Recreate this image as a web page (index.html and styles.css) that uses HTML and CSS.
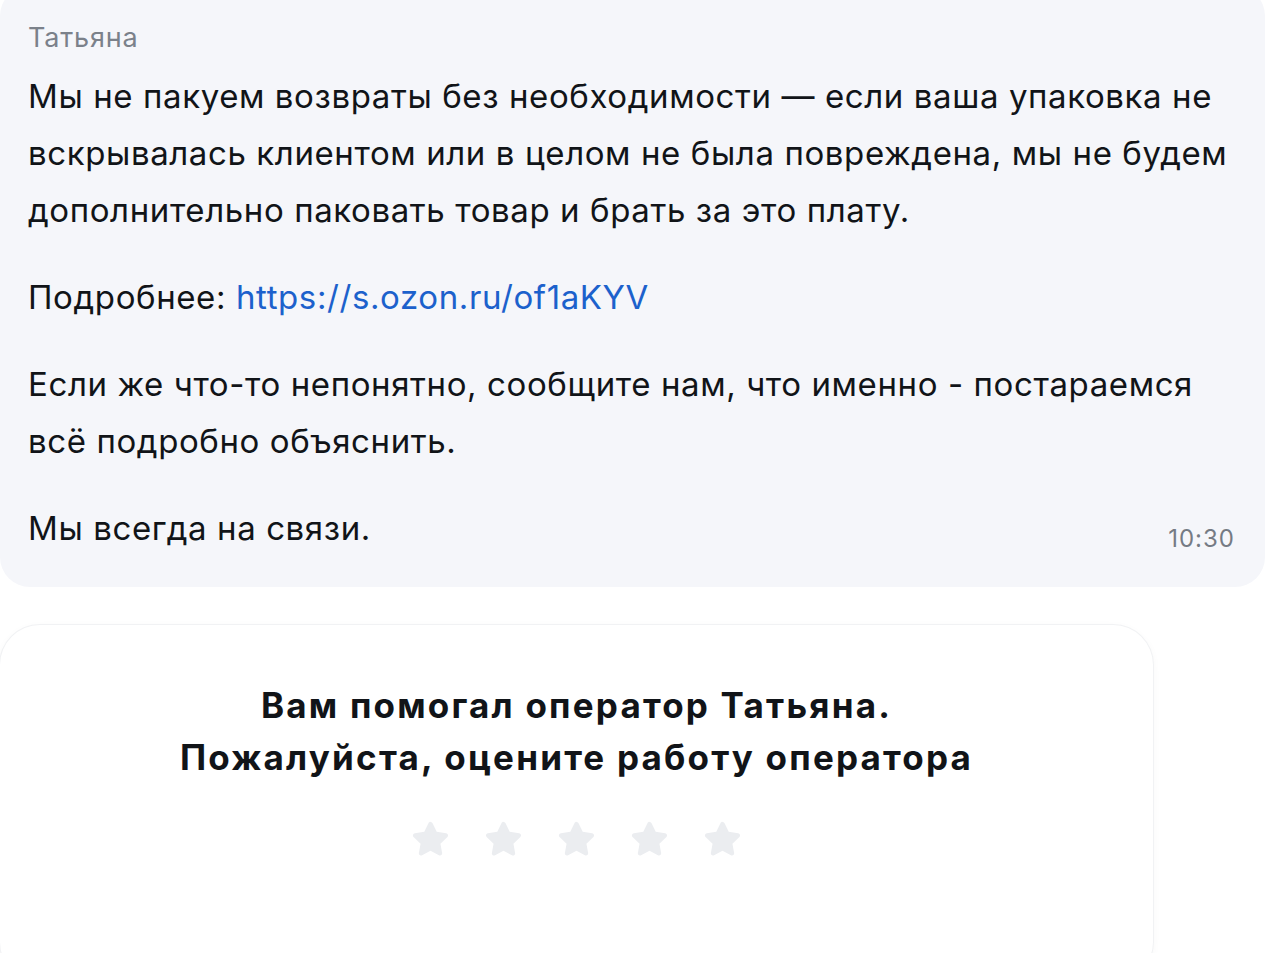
FILE: index.html
```html
<!DOCTYPE html>
<html lang="ru">
<head>
    <meta charset="UTF-8">
    <meta name="viewport" content="width=device-width, initial-scale=1.0">
    <title>Чат поддержки</title>
    <link rel="stylesheet" href="styles.css">
</head>
<body>
    <div class="chat">
        <div class="bubble">
            <div class="author">Татьяна</div>
            <p>Мы не пакуем возвраты без необходимости — если ваша упаковка не вскрывалась клиентом или в целом не была повреждена, мы не будем дополнительно паковать товар и брать за это плату.</p>
            <p>Подробнее: <a href="#">https://s.ozon.ru/of1aKYV</a></p>
            <p>Если же что-то непонятно, сообщите нам, что именно - постараемся всё подробно объяснить.</p>
            <div class="last-row">
                <p>Мы всегда на связи.</p>
                <span class="time">10:30</span>
            </div>
        </div>

        <div class="rating-card">
            <h2>Вам помогал оператор Татьяна.<br>Пожалуйста, оцените работу оператора</h2>
            <div class="stars">
                <svg viewBox="0 0 24 24"><path d="M12 2.6c.5 0 .9.3 1.1.7l2.2 4.6 5 .7c1 .1 1.4 1.3.7 2l-3.7 3.6.9 5c.2 1-.9 1.7-1.7 1.2L12 18l-4.5 2.4c-.9.5-1.9-.3-1.7-1.2l.9-5-3.7-3.6c-.7-.7-.3-1.9.7-2l5-.7 2.2-4.6c.2-.4.6-.7 1.1-.7z"/></svg>
                <svg viewBox="0 0 24 24"><path d="M12 2.6c.5 0 .9.3 1.1.7l2.2 4.6 5 .7c1 .1 1.4 1.3.7 2l-3.7 3.6.9 5c.2 1-.9 1.7-1.7 1.2L12 18l-4.5 2.4c-.9.5-1.9-.3-1.7-1.2l.9-5-3.7-3.6c-.7-.7-.3-1.9.7-2l5-.7 2.2-4.6c.2-.4.6-.7 1.1-.7z"/></svg>
                <svg viewBox="0 0 24 24"><path d="M12 2.6c.5 0 .9.3 1.1.7l2.2 4.6 5 .7c1 .1 1.4 1.3.7 2l-3.7 3.6.9 5c.2 1-.9 1.7-1.7 1.2L12 18l-4.5 2.4c-.9.5-1.9-.3-1.7-1.2l.9-5-3.7-3.6c-.7-.7-.3-1.9.7-2l5-.7 2.2-4.6c.2-.4.6-.7 1.1-.7z"/></svg>
                <svg viewBox="0 0 24 24"><path d="M12 2.6c.5 0 .9.3 1.1.7l2.2 4.6 5 .7c1 .1 1.4 1.3.7 2l-3.7 3.6.9 5c.2 1-.9 1.7-1.7 1.2L12 18l-4.5 2.4c-.9.5-1.9-.3-1.7-1.2l.9-5-3.7-3.6c-.7-.7-.3-1.9.7-2l5-.7 2.2-4.6c.2-.4.6-.7 1.1-.7z"/></svg>
                <svg viewBox="0 0 24 24"><path d="M12 2.6c.5 0 .9.3 1.1.7l2.2 4.6 5 .7c1 .1 1.4 1.3.7 2l-3.7 3.6.9 5c.2 1-.9 1.7-1.7 1.2L12 18l-4.5 2.4c-.9.5-1.9-.3-1.7-1.2l.9-5-3.7-3.6c-.7-.7-.3-1.9.7-2l5-.7 2.2-4.6c.2-.4.6-.7 1.1-.7z"/></svg>
            </div>
        </div>
    </div>
</body>
</html>
```

FILE: styles.css
```css
body {
    margin: 0;
    background: #ffffff;
    font-family: Inter, "Noto Sans", sans-serif;
    color: #111418;
    overflow: hidden;
}

.chat {
    width: 1265px;
}

.bubble {
    margin-top: -14px;
    background: #f5f6fa;
    border-radius: 30px;
    padding: 32px 25px 30px 28px;
}

.author {
    font-size: 27px;
    line-height: 40px;
    letter-spacing: 0.8px;
    color: #7b818a;
    margin-bottom: 10px;
}

.bubble p {
    margin: 0 0 30px;
    font-size: 33px;
    line-height: 57px;
    letter-spacing: 0.6px;
}

.bubble a {
    color: #1c61cc;
    text-decoration: none;
}

.last-row {
    display: flex;
    justify-content: space-between;
    align-items: flex-end;
}

.last-row p {
    margin: 0;
}

.time {
    font-size: 24px;
    letter-spacing: 1px;
    color: #757b84;
    line-height: 36px;
    padding-right: 5px;
}

.rating-card {
    width: 1153px;
    margin-top: 38px;
    background: #ffffff;
    border-radius: 40px;
    box-shadow: 0 0 0 1px #f1f2f4, 0 2px 8px rgba(0, 20, 50, 0.04);
    padding: 54px 0 120px;
    box-sizing: border-box;
    text-align: center;
}

.rating-card h2 {
    margin: 0;
    font-size: 35px;
    line-height: 52px;
    font-weight: 700;
    letter-spacing: 2.2px;
}

.stars {
    display: flex;
    justify-content: center;
    gap: 28px;
    margin-top: 34px;
}

.stars svg {
    width: 45px;
    height: 45px;
    fill: #ebedf0;
}
```
